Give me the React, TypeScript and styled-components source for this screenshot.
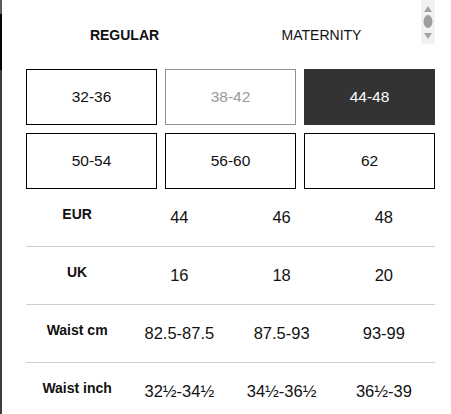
import React from 'react';
import styled, { createGlobalStyle } from 'styled-components';

const GlobalStyle = createGlobalStyle`
    html, body {
        margin: 0;
        padding: 0;
        background: #ffffff;
    }
    body {
        font-family: "Liberation Sans", Arial, sans-serif;
        color: #111111;
    }
`;

const sizes = [
    { label: "32-36", state: "normal" },
    { label: "38-42", state: "disabled" },
    { label: "44-48", state: "selected" },
    { label: "50-54", state: "normal" },
    { label: "56-60", state: "normal" },
    { label: "62", state: "normal" },
] as const;

const rows = [
    { name: "EUR", values: ["44", "46", "48"] },
    { name: "UK", values: ["16", "18", "20"] },
    { name: "Waist cm", values: ["82.5-87.5", "87.5-93", "93-99"] },
    { name: "Waist inch", values: ["32½-34½", "34½-36½", "36½-39"] },
];

const App: React.FC = () => {
    return (
        <Page>
            <GlobalStyle />
            <EdgeStrip />
            <Content>
                <Header>
                    <Tabs>
                        <Tab active>REGULAR</Tab>
                        <Tab>MATERNITY</Tab>
                    </Tabs>
                    <MiniScroll>
                        <svg width="14" height="44" viewBox="0 0 14 44">
                            <path d="M7 6 L11 12 L3 12 Z" fill="#a3a3a3" />
                            <ellipse cx="7" cy="21.5" rx="4.5" ry="6.5" fill="#9e9e9e" />
                            <path d="M3 33 L11 33 L7 39 Z" fill="#a3a3a3" />
                        </svg>
                    </MiniScroll>
                </Header>
                <SizeGrid>
                    {sizes.map((s) => (
                        <SizeButton key={s.label} state={s.state}>
                            {s.label}
                        </SizeButton>
                    ))}
                </SizeGrid>
                <Table>
                    {rows.map((r) => (
                        <Row key={r.name}>
                            <LabelCell>{r.name}</LabelCell>
                            {r.values.map((v, i) => (
                                <ValueCell key={i}>{v}</ValueCell>
                            ))}
                        </Row>
                    ))}
                </Table>
            </Content>
        </Page>
    );
};

const Page = styled.div`
    display: flex;
    width: 451px;
    height: 414px;
    overflow: hidden;
    background: #ffffff;
`;

const EdgeStrip = styled.div`
    flex: 0 0 2px;
    height: 100%;
    background: linear-gradient(
        to bottom,
        #5a5a5a 0px,
        #5a5a5a 14px,
        #050505 14px,
        #050505 70px,
        #3c3c3c 70px
    );
`;

const Content = styled.div`
    display: flex;
    flex-direction: column;
    width: 409px;
    margin-left: 24px;
`;

const Header = styled.div`
    display: flex;
    height: 69px;
`;

const Tabs = styled.div`
    display: flex;
    width: 394px;
    height: 69px;
`;

const Tab = styled.div<{ active?: boolean }>`
    flex: 1;
    display: flex;
    align-items: center;
    justify-content: center;
    font-size: 14px;
    font-weight: ${(p) => (p.active ? 700 : 400)};
    color: #111111;
    letter-spacing: 0;
`;

const MiniScroll = styled.div`
    margin-left: 1px;
    width: 14px;
    height: 44px;
    background: #f2f2f2;
    display: flex;
`;

const SizeGrid = styled.div`
    display: grid;
    grid-template-columns: repeat(3, 1fr);
    grid-auto-rows: 56px;
    gap: 8px;
`;

const SizeButton = styled.div<{ state: "normal" | "disabled" | "selected" }>`
    box-sizing: border-box;
    display: flex;
    align-items: center;
    justify-content: center;
    font-size: 15.5px;
    border: 1px solid
        ${(p) => (p.state === "disabled" ? "#8f8f8f" : p.state === "selected" ? "#333333" : "#000000")};
    background: ${(p) => (p.state === "selected" ? "#333333" : "#ffffff")};
    color: ${(p) => (p.state === "disabled" ? "#9a9a9a" : p.state === "selected" ? "#ffffff" : "#111111")};
`;

const Table = styled.div`
    display: flex;
    flex-direction: column;
`;

const Row = styled.div`
    display: grid;
    grid-template-columns: repeat(4, 1fr);
    height: 57px;
    border-bottom: 1px solid #cfcfcf;
`;

const LabelCell = styled.div`
    display: flex;
    align-items: center;
    justify-content: center;
    padding-bottom: 8px;
    font-size: 14px;
    font-weight: 700;
    color: #111111;
`;

const ValueCell = styled.div`
    display: flex;
    align-items: center;
    justify-content: center;
    font-size: 16.5px;
    color: #111111;
`;

export default App;
